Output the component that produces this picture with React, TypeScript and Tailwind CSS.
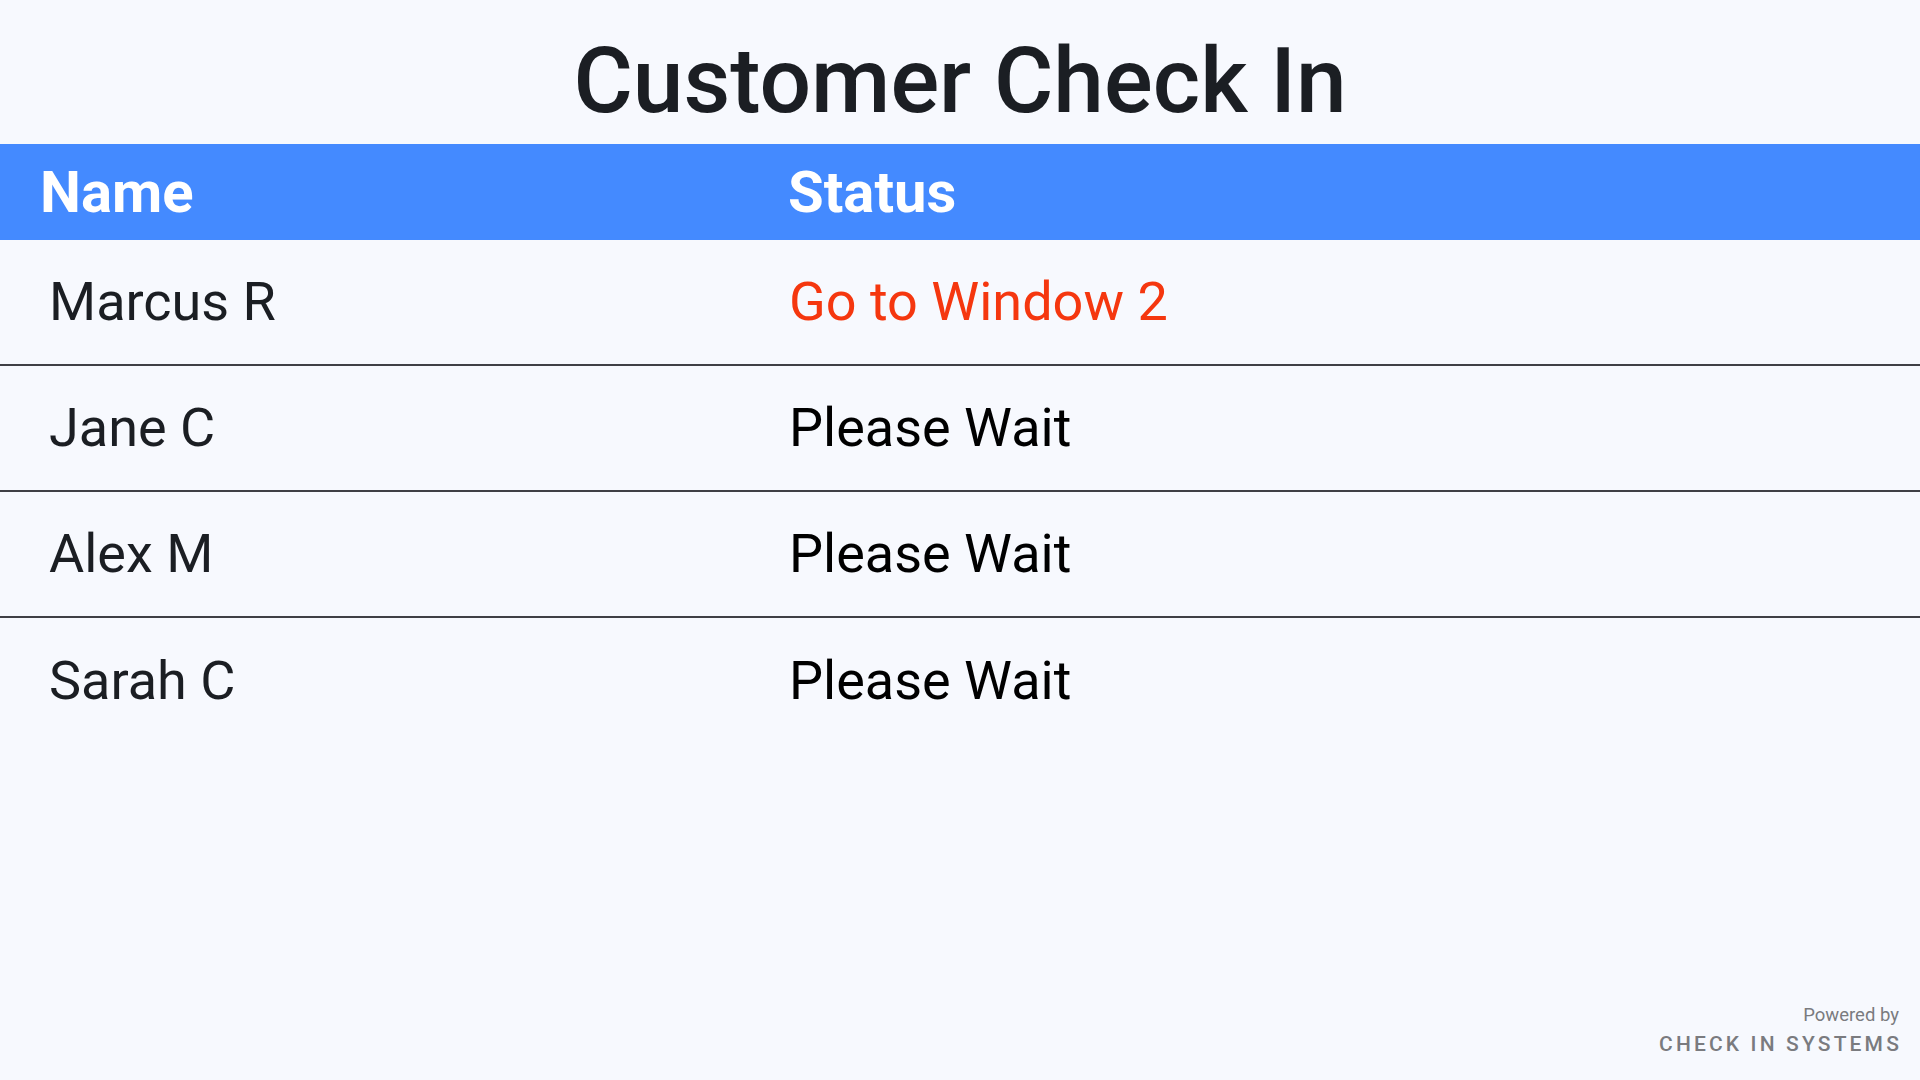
import React from "react";

const rows = [
  { name: "Marcus R", status: "Go to Window 2", call: true },
  { name: "Jane C", status: "Please Wait", call: false },
  { name: "Alex M", status: "Please Wait", call: false },
  { name: "Sarah C", status: "Please Wait", call: false },
];

export default function App() {
  return (
    <div
      className="w-[1920px] h-[1080px] bg-[#f7f9fe] flex flex-col overflow-hidden"
      style={{ fontFamily: "Roboto, 'Noto Sans', sans-serif" }}
    >
      <h1 className="h-[144px] pt-[36px] text-center text-[91px] font-medium text-[#1b1e23] leading-none">
        Customer Check In
      </h1>
      <div className="h-[96px] bg-[#448aff] grid grid-cols-[748px_1fr] items-center pl-[40px] text-white font-bold text-[58px] leading-none">
        <div>Name</div>
        <div>Status</div>
      </div>
      <div className="flex flex-col">
        {rows.map((r, i) => (
          <div
            key={r.name}
            className={
              "h-[126px] grid grid-cols-[740px_1fr] items-center pl-[49px] text-[54px] leading-none " +
              (i < rows.length - 1 ? "border-b-2 border-[#3f4045]" : "")
            }
          >
            <div className="text-[#1b1e23]">{r.name}</div>
            <div className={r.call ? "text-[#f5370f]" : "text-black"}>{r.status}</div>
          </div>
        ))}
      </div>
      <div className="mt-auto flex flex-col items-end pr-[21px] pb-[23px] text-[#7a7b7f]">
        <div className="text-[18.5px] leading-[20px]">Powered by</div>
        <div className="text-[21px] leading-[26px] font-medium tracking-[0.15em] mt-[6px] mr-[-3px]">
          CHECK IN SYSTEMS
        </div>
      </div>
    </div>
  );
}
